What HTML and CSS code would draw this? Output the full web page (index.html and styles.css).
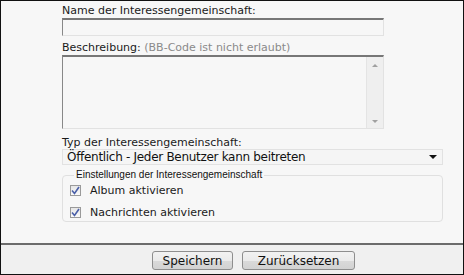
FILE: index.html
```html
<!DOCTYPE html>
<html lang="de">
<head>
    <meta charset="UTF-8">
    <title>Interessengemeinschaft</title>
    <link rel="stylesheet" href="styles.css">
</head>
<body>
    <div class="frame">
        <!-- Formularfelder -->
        <div class="form-body">
            <label class="field-label">Name der Interessengemeinschaft:</label>
            <div class="text-input"></div>

            <label class="field-label">Beschreibung: <span class="hint">(BB-Code ist nicht erlaubt)</span></label>
            <div class="text-area">
                <div class="scrollbar">
                    <span class="arrow up"></span>
                    <span class="arrow down"></span>
                </div>
            </div>

            <label class="field-label">Typ der Interessengemeinschaft:</label>
            <div class="select-box">
                <span class="select-text">Öffentlich - Jeder Benutzer kann beitreten</span>
                <span class="select-arrow"></span>
            </div>

            <fieldset class="settings">
                <legend>Einstellungen der Interessengemeinschaft</legend>
                <div class="check-row">
                    <span class="checkbox"><svg width="9" height="9" viewBox="0 0 9 9"><path d="M1 4.5 L3.5 7.5 L8 1" fill="none" stroke="#4a5fa8" stroke-width="1.6"/></svg></span>
                    <span class="check-label">Album aktivieren</span>
                </div>
                <div class="check-row">
                    <span class="checkbox"><svg width="9" height="9" viewBox="0 0 9 9"><path d="M1 4.5 L3.5 7.5 L8 1" fill="none" stroke="#4a5fa8" stroke-width="1.6"/></svg></span>
                    <span class="check-label">Nachrichten aktivieren</span>
                </div>
            </fieldset>
        </div>

        <!-- Buttonleiste -->
        <div class="button-bar">
            <button class="btn btn-save">Speichern</button>
            <button class="btn btn-reset">Zurücksetzen</button>
        </div>
    </div>
</body>
</html>
```

FILE: styles.css
```css
* {
    box-sizing: border-box;
    margin: 0;
    padding: 0;
}

body {
    width: 464px;
    height: 275px;
    font-family: 'DejaVu Sans', Verdana, sans-serif;
    font-size: 11px;
    color: #1a1a1a;
    background: #fff;
}

/* Rahmen */
.frame {
    width: 464px;
    height: 275px;
    border: 1px solid #111;
    background: #f7f7f7;
    display: flex;
    flex-direction: column;
}

.form-body {
    flex: 1;
    padding: 4px 20px 0 61px;
    display: flex;
    flex-direction: column;
}

.field-label {
    display: block;
    line-height: 12px;
    height: 12px;
    margin-bottom: 1px;
}

.hint {
    color: #8a8a8a;
}

.text-input {
    width: 322px;
    height: 18px;
    background: #f7f7f7;
    border: 1px solid #e2e2e2;
    border-top: 2px solid #777;
    border-left: 1px solid #888;
    margin-bottom: 6px;
}

.text-area {
    width: 322px;
    height: 74px;
    background: #f7f7f7;
    border: 1px solid #e2e2e2;
    border-top: 2px solid #777;
    border-left: 1px solid #888;
    display: flex;
    justify-content: flex-end;
    margin-bottom: 8px;
}

.scrollbar {
    width: 17px;
    height: 100%;
    background: #efefef;
    border-left: 1px solid #e4e4e4;
    display: flex;
    flex-direction: column;
    justify-content: space-between;
    align-items: center;
    padding: 7px 0 5px;
}

.arrow {
    width: 0;
    height: 0;
    border-left: 3px solid transparent;
    border-right: 3px solid transparent;
}

.arrow.up {
    border-bottom: 3px solid #a0a0a0;
}

.arrow.down {
    border-top: 3px solid #a0a0a0;
}

.select-box {
    width: 381px;
    height: 16px;
    background: #f5f5f5;
    border: 1px solid #e2e2e2;
    display: flex;
    align-items: center;
    justify-content: space-between;
    padding: 0 5px 0 4px;
    margin-top: -1px;
    margin-bottom: 8px;
}

.select-text {
    font-size: 12px;
    line-height: 14px;
    letter-spacing: -0.3px;
    color: #111;
}

.select-arrow {
    width: 0;
    height: 0;
    border-left: 4px solid transparent;
    border-right: 4px solid transparent;
    border-top: 4px solid #111;
}

/* Einstellungen */
.settings {
    width: 381px;
    height: 53px;
    border: 1px solid #e0e0e0;
    border-radius: 4px;
    padding: 0 0 0 7px;
    margin-top: -4px;
}

.settings legend {
    font-family: 'Liberation Sans', Tahoma, sans-serif;
    font-size: 10px;
    color: #111;
    padding: 0 2px;
    margin-left: 4px;
    line-height: 12px;
}

.check-row {
    display: flex;
    align-items: center;
    gap: 9px;
    height: 14px;
    margin-top: 2px;
}

.check-row + .check-row {
    margin-top: 8px;
}

.checkbox {
    width: 11px;
    height: 11px;
    border: 1px solid #9a9a9a;
    background: linear-gradient(#e6e6e6, #fafafa);
    display: flex;
    align-items: center;
    justify-content: center;
}

/* Buttonleiste */
.button-bar {
    height: 31px;
    border-top: 2px solid #6c6c6c;
    background: #f0f0f0;
    display: flex;
    gap: 9px;
    padding: 6px 0 0 151px;
}

.btn {
    font-family: 'DejaVu Sans', Verdana, sans-serif;
    font-size: 12px;
    color: #111;
    height: 19px;
    border: 1px solid #8e8e8e;
    border-radius: 3px;
    background: linear-gradient(#f2f2f2 0%, #ebebeb 50%, #dadada 51%, #d2d2d2 100%);
    padding: 0;
}

.btn-save {
    width: 81px;
}

.btn-reset {
    width: 113px;
}
```
